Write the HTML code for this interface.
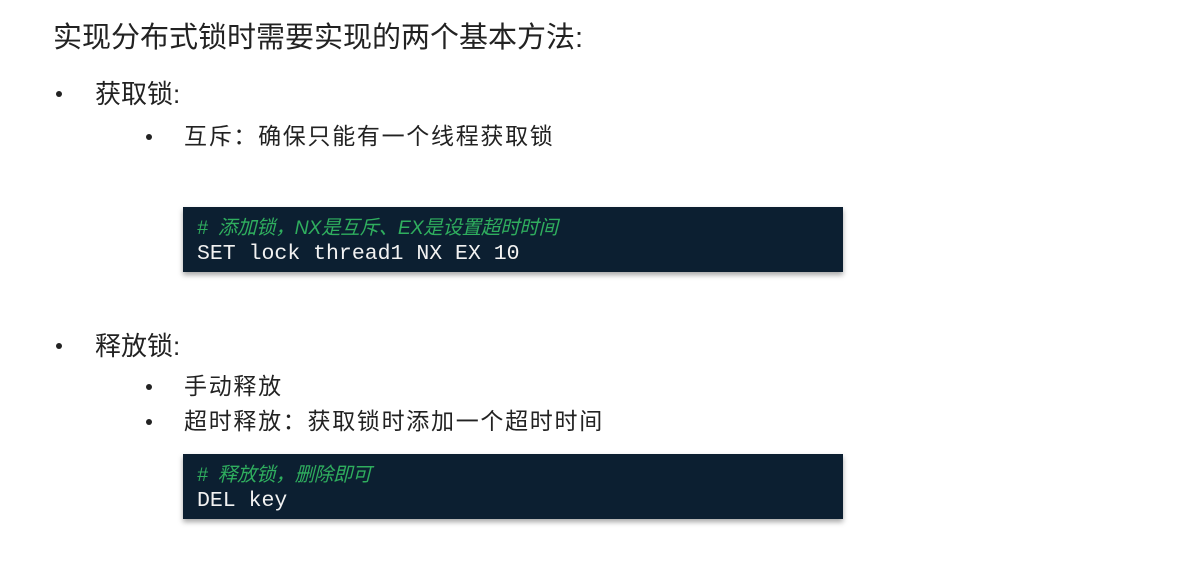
<!DOCTYPE html>
<html><head><meta charset="utf-8"><style>
body{margin:0;width:1190px;height:562px;background:#fff;position:relative;overflow:hidden;font-family:"Liberation Sans","Noto Sans CJK SC",sans-serif;color:#222}
.t{position:absolute;white-space:nowrap;line-height:1}
.b{position:absolute;width:6px;height:6px;border-radius:50%;background:#222}
.code{position:absolute;left:183px;width:660px;height:65px;background:#0c1f31;box-shadow:0 3px 5px rgba(0,0,0,.35)}
.code div{position:absolute;left:14px;white-space:nowrap;line-height:1}
.c{color:#2fae5e;font-style:italic;font-size:19.5px;font-family:"Liberation Sans","Noto Sans CJK SC",sans-serif;top:12px;letter-spacing:-0.3px}
.m{color:#f2f2f2;font-family:"Liberation Mono","DejaVu Sans Mono",monospace;font-size:21.5px;top:37px}
</style></head><body>
<div class="t" style="left:53px;top:24px;font-size:29px;">实现分布式锁时需要实现的两个基本方法:</div>
<div class="b" style="left:56px;top:91px"></div>
<div class="t" style="left:95px;top:81px;font-size:26px;">获取锁:</div>
<div class="b" style="left:146px;top:134px"></div>
<div class="t" style="left:184px;top:125px;font-size:23px;letter-spacing:1.7px">互斥：确保只能有一个线程获取锁</div>
<div class="code" style="top:207px"><div class="c"># &nbsp;添加锁，NX是互斥、EX是设置超时时间</div><div class="m">SET lock thread1 NX EX 10</div></div>
<div class="b" style="left:56px;top:343px"></div>
<div class="t" style="left:95px;top:333px;font-size:26px;">释放锁:</div>
<div class="b" style="left:146px;top:384px"></div>
<div class="t" style="left:184px;top:375px;font-size:23px;letter-spacing:1.7px">手动释放</div>
<div class="b" style="left:146px;top:419px"></div>
<div class="t" style="left:184px;top:410px;font-size:23px;letter-spacing:1.7px">超时释放：获取锁时添加一个超时时间</div>
<div class="code" style="top:454px"><div class="c"># &nbsp;释放锁，删除即可</div><div class="m">DEL key</div></div>
</body></html>
